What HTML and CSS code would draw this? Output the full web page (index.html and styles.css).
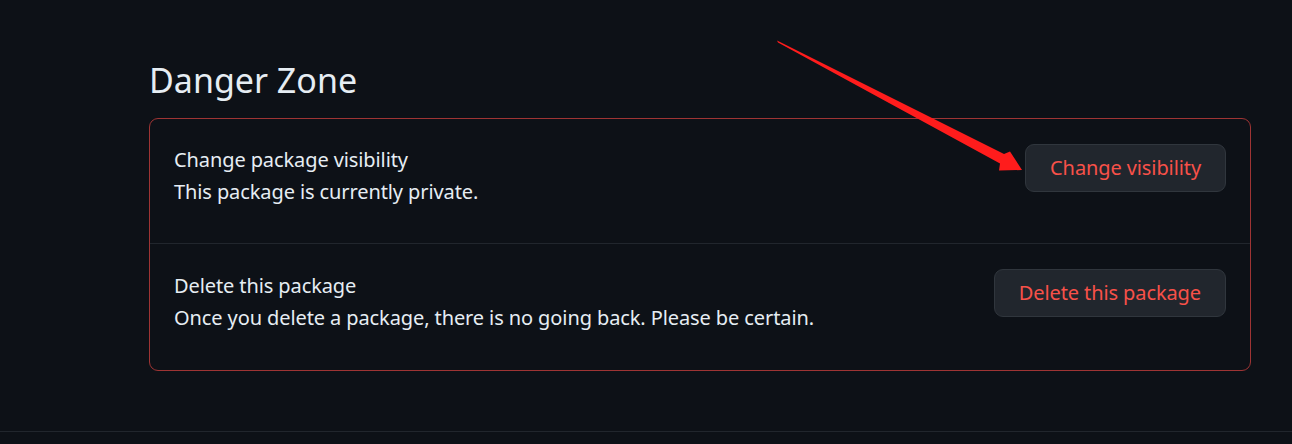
FILE: index.html
```html
<!DOCTYPE html>
<html>
<head>
<meta charset="utf-8">
<link rel="stylesheet" href="styles.css">
</head>
<body>
<div class="page">
  <main class="content">
    <h2 class="title">Danger Zone</h2>
    <div class="box">
      <div class="row">
        <div class="info">
          <div class="label">Change package visibility</div>
          <p class="desc">This package is currently private.</p>
        </div>
        <button class="btn">Change visibility</button>
      </div>
      <div class="row row-last">
        <div class="info">
          <div class="label">Delete this package</div>
          <p class="desc">Once you delete a package, there is no going back. Please be certain.</p>
        </div>
        <button class="btn">Delete this package</button>
      </div>
    </div>
  </main>
  <footer class="footer"></footer>
  <svg class="arrow" width="1292" height="444" viewBox="0 0 1292 444">
    <polygon points="777,40.5 1004,154 1010,151.5 1022,170 999,170.5 1000,163.5 778,42.5" fill="#ff1c1c"/>
  </svg>
</div>
</body>
</html>
```
FILE: styles.css
```css
* { box-sizing: border-box; }
html, body { margin: 0; padding: 0; }
body {
  background: #0d1117;
  color: #e6edf3;
  font-family: "Noto Sans", "Open Sans", sans-serif;
  width: 1292px;
  height: 444px;
  overflow: hidden;
}
.page {
  position: relative;
  height: 444px;
  display: flex;
  flex-direction: column;
}
.content {
  padding: 58px 41px 0 149px;
}
.title {
  margin: 0 0 15px 0;
  font-size: 34px;
  font-weight: 400;
  line-height: 45px;
  color: #e6edf3;
}
.box {
  border: 1px solid #9e3434;
  border-radius: 9px;
}
.row {
  display: flex;
  justify-content: space-between;
  align-items: flex-start;
  padding: 24px;
}
.row + .row {
  border-top: 1px solid #21262d;
}
.row-last {
  padding-bottom: 25px;
}
.row-last .info {
  padding-top: 2px;
}
.info {
  font-size: 20px;
  letter-spacing: -0.1px;
  line-height: 31.5px;
  color: #e6edf3;
  padding-top: 1px;
}
.desc {
  margin: 0 0 12px 0;
}
.btn {
  height: 48px;
  padding: 0 24px;
  margin-top: 1px;
  background: #21262d;
  border: 1px solid #30363d;
  border-radius: 9px;
  color: #f85149;
  font-family: inherit;
  font-size: 20px;
  letter-spacing: -0.1px;
  line-height: 46px;
}
.footer {
  margin-top: 60px;
  border-top: 1px solid #21262d;
}
.arrow {
  position: absolute;
  left: 0;
  top: 0;
  pointer-events: none;
}
```
